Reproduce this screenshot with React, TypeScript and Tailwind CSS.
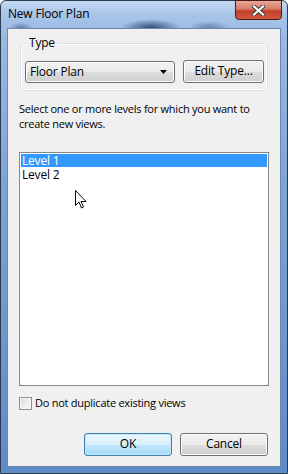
const font = { fontFamily: '"Open Sans", "Noto Sans", sans-serif' };

function AeroButton({ label, w, focused }: { label: string; w: string; focused?: boolean }) {
  return (
    <button
      className={`${w} h-[23px] rounded-[3px] border text-[12px] text-black flex items-center justify-center ${
        focused
          ? "border-[#3c7fb1] bg-[linear-gradient(#eaf6fd_0%,#d9f0fc_50%,#bee6fd_51%,#a7d9f5_100%)] shadow-[inset_0_0_0_1px_#c9e9fb]"
          : "border-[#707070] bg-[linear-gradient(#f2f2f2_0%,#ebebeb_50%,#dddddd_51%,#cfcfcf_100%)] shadow-[inset_0_0_0_1px_#fcfcfc]"
      }`}
    >
      {label}
    </button>
  );
}

export default function App() {
  return (
    <div className="w-[288px] h-[474px] bg-white tracking-[-0.2px]" style={font}>
      {/* window frame */}
      <div className="relative h-full rounded-t-[6px] border border-[#2a3b52] bg-[linear-gradient(180deg,#b9d1ee_0%,#9ab9e1_8%,#7fa3d3_40%,#5f8bc6_100%)] px-[6px] pb-[6px] pt-[27px] flex flex-col">
        {/* glass blotches */}
        <div className="absolute left-0 right-0 top-0 h-[28px] rounded-t-[6px] bg-[radial-gradient(ellipse_30px_9px_at_150px_27px,rgba(30,55,100,0.85)_0%,rgba(36,63,110,0)_100%),radial-gradient(ellipse_20px_7px_at_208px_27px,rgba(58,90,140,0.6)_0%,rgba(58,90,140,0)_100%),radial-gradient(ellipse_12px_6px_at_20px_27px,rgba(40,70,120,0.5)_0%,rgba(40,70,120,0)_100%),linear-gradient(180deg,#c3d8f1_0%,#a8c4e8_50%,#9dbce3_100%)]" />
        <div className="absolute left-[7px] top-[5px] text-[12px] text-black leading-[16px]">New Floor Plan</div>
        {/* close button */}
        <div className="absolute right-[5px] top-[-1px] w-[47px] h-[20px] rounded-b-[4px] border border-[#4a1a14] bg-[linear-gradient(180deg,#e9a99b_0%,#d67a66_45%,#c0402a_55%,#d2583c_100%)] flex items-center justify-center">
          <svg width="13" height="11" viewBox="0 0 13 11">
            <path d="M2 1.5 L11 9.5 M11 1.5 L2 9.5" stroke="#3a3a3a" strokeWidth="4" strokeLinecap="square" />
            <path d="M2 1.5 L11 9.5 M11 1.5 L2 9.5" stroke="#ffffff" strokeWidth="2.2" strokeLinecap="square" />
          </svg>
        </div>

        {/* client area */}
        <div className="relative flex-1 border border-[#6b86a8] bg-[#f0f0f0] px-[11px] flex flex-col">
          {/* group box */}
          <div className="relative mt-[14px] mx-[1px] h-[48px] rounded-[3px] border border-[#d5dfe5] shadow-[inset_0_0_0_1px_#ffffff]">
            <span className="absolute left-[6px] top-[-9px] bg-[#f0f0f0] px-[2px] text-[12px] leading-[16px] text-black">Type</span>
            <div className="flex items-center gap-[8px] pl-[4px] pt-[17px]">
              <div className="w-[150px] h-[22px] rounded-[3px] border border-[#707070] bg-[linear-gradient(#f2f2f2_0%,#ebebeb_50%,#dddddd_51%,#cfcfcf_100%)] shadow-[inset_0_0_0_1px_#fcfcfc] flex items-center pl-[4px] pr-[7px] text-[12px] text-black">
                <span className="flex-1">Floor Plan</span>
                <svg width="7" height="4" viewBox="0 0 7 4">
                  <path d="M0 0 H7 L3.5 4 Z" fill="#000" />
                </svg>
              </div>
              <div className="-mt-[2px]">
                <AeroButton label="Edit Type..." w="w-[81px]" />
              </div>
            </div>
          </div>

          <p className="mt-[10px] text-[11px] tracking-[-0.25px] leading-[15px] text-black">
            Select one or more levels for which you want to create new views.
          </p>

          {/* list */}
          <div className="relative mt-[21px] h-[234px] border border-[#828790] bg-white p-[1px] text-[12px]">
            <div className="h-[13px] bg-[#3399ff] text-white pl-[1px] leading-[13px]">Level 1</div>
            <div className="mt-[1px] text-black pl-[1px] leading-[14px]">Level 2</div>
            {/* mouse cursor */}
            <svg className="absolute left-[55px] top-[37px]" width="12" height="19" viewBox="0 0 12 19">
              <path d="M0.5 0.5 L0.5 15.5 L4 12 L6.5 18 L8.5 17 L6 11.5 L11 11.5 Z" fill="#fff" stroke="#000" strokeWidth="1" strokeLinejoin="miter" />
            </svg>
          </div>

          {/* checkbox */}
          <label className="mt-[9px] flex items-center gap-[3px] text-[11px] tracking-[-0.25px] text-black">
            <span className="w-[13px] h-[13px] border border-[#8e8f8f] bg-[linear-gradient(135deg,#dcdcdc,#fbfbfb)] shadow-[inset_0_0_0_1px_#f4f4f4]" />
            Do not duplicate existing views
          </label>

          {/* buttons */}
          <div className="mt-[21px] flex justify-end gap-[8px] pr-[1px]">
            <AeroButton label="OK" w="w-[88px]" focused />
            <AeroButton label="Cancel" w="w-[88px]" />
          </div>
        </div>
      </div>
    </div>
  );
}
